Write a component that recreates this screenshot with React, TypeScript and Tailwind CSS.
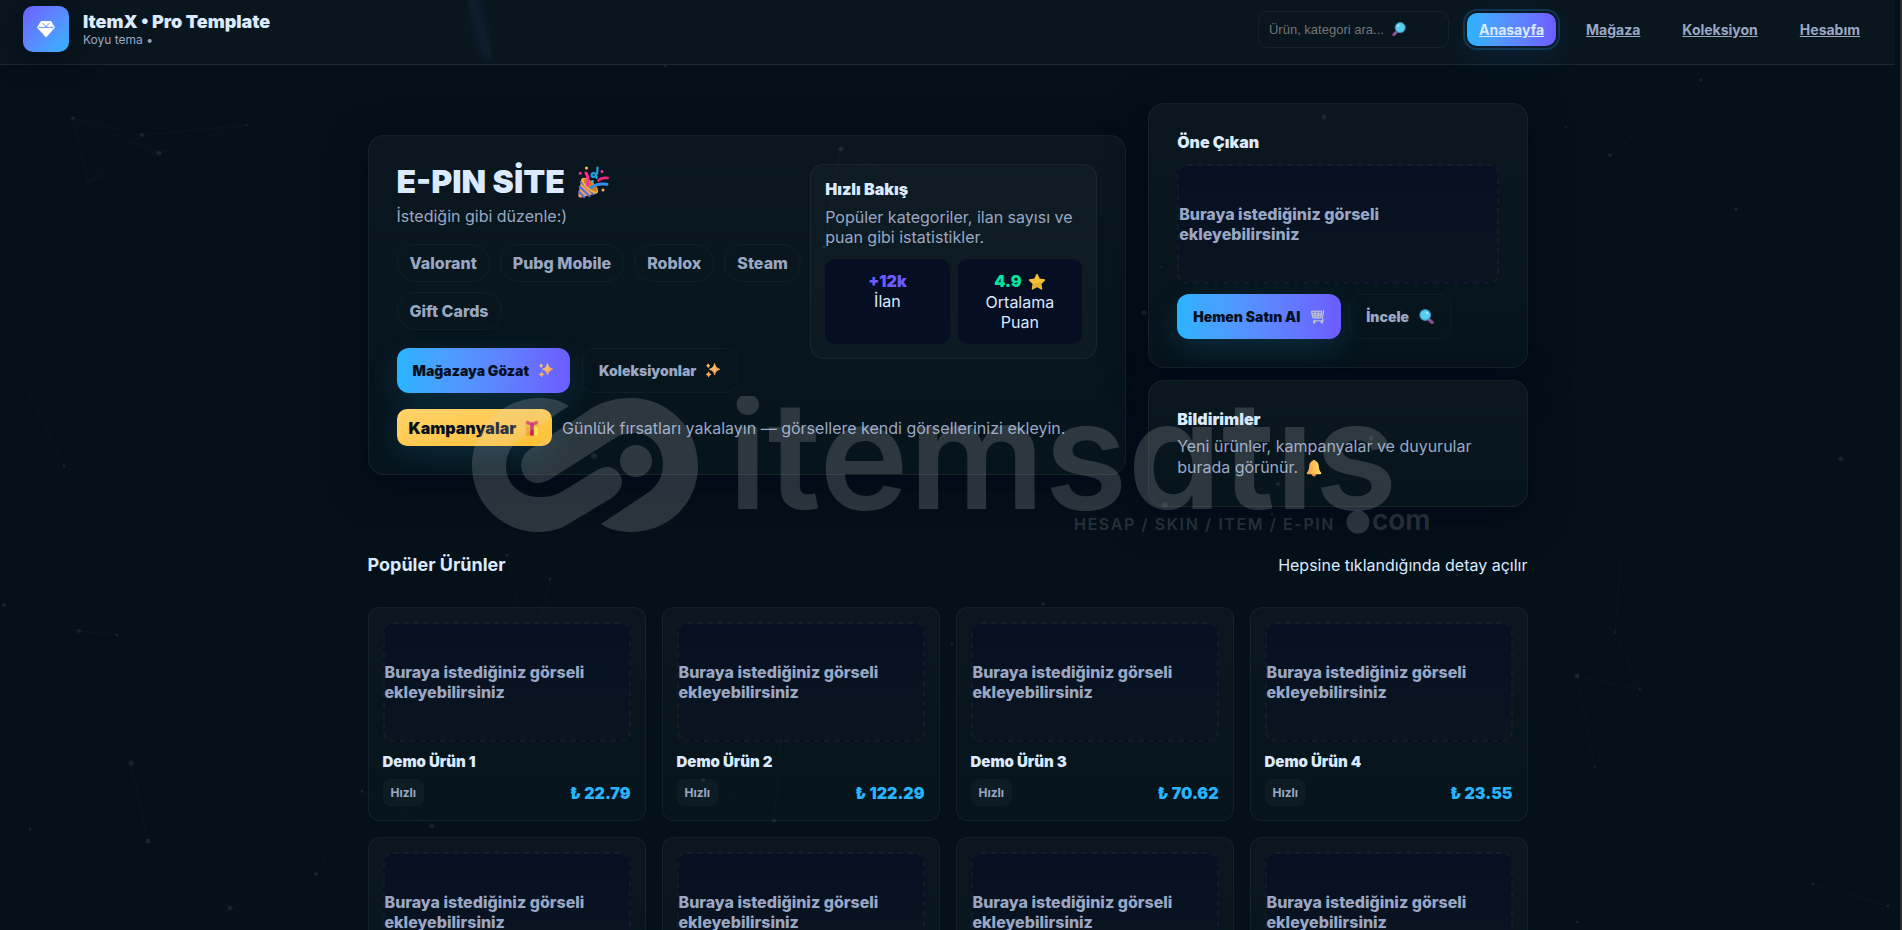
import React from 'react';

const NAV = ['Anasayfa', 'Mağaza', 'Koleksiyon', 'Hesabım'];
const CHIPS = ['Valorant', 'Pubg Mobile', 'Roblox', 'Steam', 'Gift Cards'];
const PRODUCTS = [
  { id: 1, price: '22.79' },
  { id: 2, price: '122.29' },
  { id: 3, price: '70.62' },
  { id: 4, price: '23.55' },
  { id: 5, price: '64.10' },
  { id: 6, price: '38.45' },
  { id: 7, price: '91.20' },
  { id: 8, price: '47.99' },
];

// x, y, radius
const DOTS: number[][] = [
  [73, 118, 2], [142, 135, 2], [159, 153, 2.5], [247, 125, 1],
  [1566, 127, 1], [1610, 155, 2], [1736, 209, 2], [1324, 117, 2.5],
  [841, 149, 2.5], [824, 247, 2], [665, 66, 1.5], [594, 456, 3], [1144, 313, 2.5], [1161, 267, 1],
  [1841, 459, 2.5], [64, 466, 1.5], [4, 605, 2], [79, 631, 2], [117, 635, 1.5],
  [131, 763, 2.5], [148, 841, 2.5], [30, 829, 1.5], [230, 908, 2.5], [316, 874, 2], [362, 791, 1.5],
  [432, 826, 2.5], [703, 780, 2], [774, 821, 2], [781, 741, 1], [952, 644, 1.5], [1043, 604, 2],
  [1577, 676, 2.5], [1640, 689, 1], [1615, 632, 1], [1595, 767, 1], [1577, 922, 1.5],
  [1813, 884, 1.5], [1888, 906, 1.5], [1371, 438, 2.5], [1278, 484, 2], [1165, 505, 3], [1272, 514, 1.5],
  [1457, 575, 1.5], [507, 555, 1.5], [550, 579, 1.5], [1701, 80, 1.5],
];

const LINES: number[][] = [
  [73, 118, 142, 135], [73, 118, 159, 153], [142, 135, 159, 153], [142, 135, 247, 125],
  [159, 153, 247, 125], [73, 118, 88, 182], [142, 135, 88, 182], [159, 153, 88, 182],
  [1701, 80, 1610, 155], [841, 149, 824, 247], [841, 149, 900, 180], [28, 390, 64, 466],
  [4, 605, 79, 631], [79, 631, 117, 635], [131, 763, 148, 841], [148, 841, 230, 908],
  [230, 908, 316, 874], [316, 874, 362, 791], [362, 791, 432, 826],
  [1577, 676, 1640, 689], [1577, 676, 1615, 632], [1615, 632, 1640, 689], [1577, 676, 1595, 767],
  [1640, 689, 1595, 767], [1615, 632, 1621, 560], [1813, 884, 1888, 906],
  [703, 780, 781, 741], [774, 821, 781, 741], [703, 780, 774, 821], [507, 555, 550, 579],
  [507, 555, 522, 622], [550, 579, 540, 622],
];

const Particles: React.FC = () => (
  <svg className="absolute inset-0 w-full h-full pointer-events-none" aria-hidden="true">
    <defs>
      <filter id="soft"><feGaussianBlur stdDeviation="4" /></filter>
    </defs>
    <path d="M470 -10L489 58" stroke="#3b4f9f" strokeOpacity="0.14" strokeWidth="12" fill="none" filter="url(#soft)" />
    {LINES.map(([x1, y1, x2, y2], i) => (
      <line key={i} x1={x1} y1={y1} x2={x2} y2={y2} stroke="#ffffff" strokeOpacity="0.025" />
    ))}
    {DOTS.map(([cx, cy, r], i) => (
      <circle key={i} cx={cx} cy={cy} r={r} fill="#ffffff" fillOpacity="0.08" />
    ))}
  </svg>
);

const Sparkles = () => (
  <svg viewBox="1 1 15 15" className="w-[15px] h-[15px] shrink-0" aria-hidden="true">
    <defs>
      <linearGradient id="spark" x1="0" y1="0" x2="0.4" y2="1">
        <stop offset="0" stopColor="#ffd65c" />
        <stop offset="1" stopColor="#ff9a62" />
      </linearGradient>
    </defs>
    <path fill="url(#spark)" stroke="url(#spark)" strokeWidth="0.8" strokeLinejoin="round" d="M9.6 1.6c.8 3.4 1.9 4.6 5.200 5.700-3.300 1.100-4.400 2.300-5.200 5.700-.8-3.400-1.900-4.600-5.200-5.700 3.300-1.100 4.400-2.300 5.200-5.700zM3.600 9.700c.400 1.700.900 2.200 2.500 2.700-1.600.500-2.100 1-2.500 2.700-.400-1.700-.900-2.200-2.500-2.700 1.600-.500 2.100-1 2.500-2.700zM3.200 1.800c.3 1.200.6 1.500 1.700 1.900-1.100.4-1.400.7-1.700 1.900-.3-1.200-.6-1.500-1.700-1.900 1.100-.4 1.400-.7 1.700-1.900z" />
  </svg>
);

const Magnifier = ({ className }: { className: string }) => (
  <svg viewBox="1 1 14 14" className={className} aria-hidden="true">
    <path d="M9.800 10.200l3.400 3.400" stroke="#8b4f8f" strokeWidth="3" strokeLinecap="round" />
    <circle cx="6.800" cy="6.600" r="5" fill="#58cdf0" stroke="#3c8fc0" strokeWidth="1" />
    <path d="M8.200 4.200l.8.900" stroke="#e6fbff" strokeWidth="1.200" strokeLinecap="round" />
  </svg>
);

const Gift = () => (
  <svg viewBox="0 0 18 18" className="w-4 h-[18px] shrink-0" aria-hidden="true">
    <rect x="2" y="7" width="14" height="10.500" rx="1" fill="#f0a524" />
    <rect x="10" y="7" width="6" height="10.500" rx="1" fill="#ffe04a" />
    <rect x="1" y="4.500" width="16" height="3.500" rx="1" fill="#f7b733" />
    <rect x="7" y="4.500" width="4" height="13" fill="#c81f63" />
    <path d="M9 5.500C6 1 3 .4 2.600 2.600 2.300 4.600 5 5.400 9 5.500zM9 5.500c3-4.500 6-5.100 6.400-2.900C15.700 4.600 13 5.400 9 5.500z" fill="#e0325f" stroke="#e0325f" />
    <rect x="7" y="2.500" width="4" height="4" rx="1" fill="#c01f5c" />
  </svg>
);

const Star = () => (
  <svg viewBox="0 0 18 18" className="w-[18px] h-[18px] shrink-0" aria-hidden="true">
    <path d="M9 1.500l2.300 4.800 5.200.7-3.800 3.700.9 5.300L9 13.500 4.400 16l.9-5.300L1.500 7l5.200-.7z" fill="#f5c235" stroke="#f5c235" strokeWidth="1.400" strokeLinejoin="round" />
    <path d="M9 13.500L4.400 16l.9-5.300 9-1.500-1.600 1.500.9 5.300z" fill="#dca32b" fillOpacity="0.6" />
  </svg>
);

const Bell = () => (
  <svg viewBox="0 0 18 18" className="inline-block align-[-4px] ml-0.5 w-[18px] h-[18px]" aria-hidden="true">
    <defs>
      <linearGradient id="bell" x1="0" y1="0" x2="1" y2="0">
        <stop offset="0" stopColor="#f09a55" />
        <stop offset="0.500" stopColor="#fcc453" />
        <stop offset="1" stopColor="#ffdd63" />
      </linearGradient>
    </defs>
    <circle cx="9" cy="15.200" r="2.200" fill="#e8843c" />
    <circle cx="9" cy="2" r="1.300" fill="#f3b04a" />
    <path d="M9 1.800c-3.400 0-4.600 2.600-4.800 5.400-.2 2.800-.8 4.400-2.200 6.300-.6.900-.2 1.700.7 1.700h12.600c.9 0 1.300-.8.700-1.700-1.400-1.900-2-3.500-2.200-6.300C13.600 4.400 12.400 1.800 9 1.800z" fill="url(#bell)" />
  </svg>
);

const Cart = () => (
  <svg viewBox="0 0 16 16" className="w-[15px] h-[15px] shrink-0" aria-hidden="true" fill="none" stroke="#c3c7d4" strokeWidth="1.100" strokeLinecap="round" strokeLinejoin="round">
    <path d="M1.500 2.500h11l-1 7H3.200z" fill="#8f97b5" fillOpacity="0.5" />
    <path d="M2 5h10.500M2.500 7.200h9.500M5 2.500l.6 7M8.700 2.500v7" />
    <path d="M14.600 1.500l-1.400 8.500 1 2.500H4" />
    <circle cx="4.500" cy="14" r="0.900" fill="#c99a86" />
    <circle cx="12.600" cy="14" r="0.900" fill="#c99a86" />
  </svg>
);

const Party = () => (
  <svg viewBox="0 0 32 32" className="w-8 h-8 shrink-0" aria-hidden="true" fill="none" strokeLinecap="round">
    <path d="M4.500 12.500L20.500 27 4.500 31.500Q1.200 32 1.300 29z" fill="#f2a154" />
    <path d="M4 16l12.600 12M3 21l9.500 9M2.200 26l5 5" stroke="#5a6fd6" strokeWidth="2.400" />
    <ellipse cx="12.900" cy="19.600" rx="4.400" ry="10.600" transform="rotate(-47 12.900 19.600)" fill="#f7b23c" />
    <ellipse cx="13.400" cy="19.200" rx="3" ry="9" transform="rotate(-47 13.400 19.200)" fill="#c98322" />
    <path d="M10.500 19c1.200-4.500 1-8-1.500-12" stroke="#ff2f92" strokeWidth="3" />
    <path d="M14 21.500c4.500-3.300 10-4.200 16-3.200" stroke="#3b8bea" strokeWidth="3" />
    <path d="M20.500 1.500c.2 4-.5 9.500-4 9.500-2.600 0-2.600-4 0-4 2.300 0 3 3.500 3.200 5" stroke="#1fa0e0" strokeWidth="2.200" />
    <path d="M21.500 14.500c2-2.400 5-3 9.200-2.500" stroke="#f0287f" strokeWidth="2.600" />
    <circle cx="15.500" cy="15.500" r="1.400" fill="#28b4e8" />
    <circle cx="9.500" cy="2" r="1.500" fill="#ffc83d" />
    <circle cx="3.200" cy="7.200" r="1.500" fill="#ff2f92" />
    <circle cx="25" cy="5.500" r="1.500" fill="#ff2f92" />
    <circle cx="26" cy="24" r="1.500" fill="#ffb35c" />
  </svg>
);

const Logo = () => (
  <div className="flex items-center justify-center w-[46px] h-[46px] rounded-[10px] bg-linear-to-br from-[#6c5cff] to-[#28b4ff] shadow-[0_6px_30px_rgba(2,6,23,0.6)]">
    <svg viewBox="0 0 20 18" className="w-5 h-[18px]" aria-hidden="true">
      <path d="M5 1h10l4 6.500L10 17.500 1 7.500z" fill="#fff" />
      <path d="M2.500 7.400h15M6.500 3l2.700 2.800L10 7l.8-1.200L13.500 3" stroke="#4f8bff" strokeWidth="0.900" fill="none" />
    </svg>
  </div>
);

const Placeholder = () => (
  <div className="flex items-center h-[120px] rounded-[10px] border-2 border-dashed border-white/4 bg-linear-to-b from-[#061022] to-[#0b1520] font-extrabold text-[#9aa7c4]">
    Buraya istediğiniz görseli ekleyebilirsiniz
  </div>
);

const card = 'border border-white/5 bg-linear-to-b from-[#0a171e] to-[#06141c] shadow-[0_10px_40px_rgba(2,6,23,0.7)]';
const primaryBtn = 'flex items-center gap-2.5 h-[45px] px-4 rounded-xl bg-linear-to-r from-[#28b4ff] to-[#6c5cff] text-[#06101f] text-sm font-black shadow-[0_10px_30px_rgba(40,180,255,0.15)]';
const ghostBtn = 'flex items-center gap-2.5 h-[45px] px-4 rounded-xl border border-white/4 text-[#9aa7c4] text-sm font-black';

const Header: React.FC = () => (
  <header className="flex items-center justify-between pt-1.5 pb-3 px-[23px] border-b border-white/8 bg-white/[0.025]">
    <div className="flex items-center gap-3.5">
      <Logo />
      <div>
        <div className="text-lg leading-[22px] font-black">ItemX • Pro Template</div>
        <div className="text-xs leading-[14px] text-[#9aa7c4]">Koyu tema •</div>
      </div>
    </div>
    <nav className="flex items-center gap-[18px]">
      <label className="relative block">
        <span className="sr-only">Ara</span>
        <input
          type="search"
          placeholder="Ürün, kategori ara..."
          className="block w-[191px] h-[37px] px-2.5 rounded-[10px] border border-white/5 bg-transparent font-['Liberation_Sans',sans-serif] text-[13px] leading-5 placeholder:text-[#757575] outline-none"
        />
        <Magnifier className="absolute left-[134px] top-[11px] w-[14px] h-[14px] -scale-x-100" />
      </label>
      {NAV.map((item, i) => (
        <a
          key={item}
          href="#"
          className={
            i === 0
              ? 'px-3 py-1.5 rounded-[10px] text-sm leading-[21px] font-bold underline text-[#dbeafe] bg-linear-to-r from-[#28b4ff] to-[#6c5cff] outline-2 outline-offset-2 outline-[#28b4ff]/20 shadow-[0_8px_30px_rgba(40,120,255,0.12)]'
              : 'px-3 py-1.5 text-sm leading-[21px] font-bold underline text-[#9aa7c4]'
          }
        >
          {item}
        </a>
      ))}
    </nav>
  </header>
);

const Hero: React.FC = () => (
  <section className={`p-7 rounded-2xl ${card}`}>
    <div className="flex items-start gap-2">
      <div className="flex-1">
        <h1 className="flex items-center gap-3 text-[32px] leading-9 font-black">
          E-PIN SİTE <Party />
        </h1>
        <p className="mt-1.5 leading-5 text-[#9aa7c4]">İstediğin gibi düzenle:)</p>
        <div className="flex flex-wrap gap-2.5 mt-[18px]">
          {CHIPS.map((chip) => (
            <span key={chip} className="px-3 py-2 rounded-full border border-white/4 leading-5 font-extrabold text-[#9aa7c4]">
              {chip}
            </span>
          ))}
        </div>
        <div className="flex gap-3 mt-[18px]">
          <button type="button" className={primaryBtn}>Mağazaya Gözat <Sparkles /></button>
          <button type="button" className={ghostBtn}>Koleksiyonlar <Sparkles /></button>
        </div>
      </div>
      <aside className="w-[287px] p-3.5 rounded-[14px] border border-white/5 bg-white/[0.025]">
        <h2 className="leading-5 font-black">Hızlı Bakış</h2>
        <p className="mt-2 leading-5 text-[#9aa7c4]">Popüler kategoriler, ilan sayısı ve puan gibi istatistikler.</p>
        <div className="grid grid-cols-2 gap-2 mt-3 text-center leading-5">
          <div className="p-3 rounded-[10px] bg-[#060e24]">
            <div className="font-black text-[#6c5cff]">+12k</div>
            İlan
          </div>
          <div className="p-3 rounded-[10px] bg-[#060e24]">
            <div className="flex items-center justify-center gap-1.5 leading-[21px] font-black text-[#00e6a0]">4.9 <Star /></div>
            Ortalama Puan
          </div>
        </div>
      </aside>
    </div>
    <div className="flex items-center gap-2.5 mt-4">
      <button type="button" className="flex items-center gap-2 h-[37px] px-3 rounded-[10px] bg-linear-to-br from-[#ffd36b] to-[#ffc02e] text-[#06101f] font-black shadow-[0_8px_30px_rgba(40,180,255,0.15)]">
        Kampanyalar <Gift />
      </button>
      <p className="leading-5 text-[#9aa7c4]">Günlük fırsatları yakalayın — görsellere kendi görsellerinizi ekleyin.</p>
    </div>
  </section>
);

const Sidebar: React.FC = () => (
  <div className="flex flex-col gap-3">
    <section className={`p-7 rounded-2xl ${card}`}>
      <h2 className="mb-3 leading-5 font-black">Öne Çıkan</h2>
      <Placeholder />
      <div className="flex gap-2 mt-2.5">
        <button type="button" className={primaryBtn}>Hemen Satın Al <Cart /></button>
        <button type="button" className={ghostBtn}>İncele <Magnifier className="w-[15px] h-[15px] shrink-0" /></button>
      </div>
    </section>
    <section className={`p-7 rounded-2xl ${card}`}>
      <h2 className="mb-[7px] leading-5 font-black">Bildirimler</h2>
      <p className="leading-[21px] text-[#9aa7c4]">Yeni ürünler, kampanyalar ve duyurular burada görünür. <Bell /></p>
    </section>
  </div>
);

const ProductCard = ({ id, price }: { id: number; price: string }) => (
  <article className="p-3.5 rounded-xl border border-white/5 bg-linear-to-b from-[#0a171e] to-[#06141c]">
    <Placeholder />
    <h3 className="mt-2.5 text-[15px] leading-5 font-black">Demo Ürün {id}</h3>
    <div className="flex items-center justify-between mt-[7px]">
      <span className="px-2 py-1.5 rounded-lg bg-white/[0.03] text-xs leading-[15px] font-bold text-[#9aa7c4]">Hızlı</span>
      <span className="leading-5 font-black text-[#28b4ff]">₺ {price}</span>
    </div>
  </article>
);

// Faint brand stamp floating over the page; the round dot doubles as the cedilla
const Watermark: React.FC = () => (
  <div className="absolute left-[470px] top-[396px] w-[964px] h-[140px] pointer-events-none text-[rgba(220,220,220,0.18)]" aria-hidden="true">
    <svg viewBox="470 396 964 140" className="w-full h-full" fill="currentColor">
      <path d="M569 406C560 400 550 398 540 398C502 398 472 428 472 466C472 503 502 532 539 532C550 532 561 529 570 523L610 499C620 493 625 483 620 475C615 466 605 465 597 470L563 491C555 496 548 497 540 497C520 497 506 484 506 466C506 453 513 443 523 436Z" />
      <path d="M529 450L592 408C604 401 617 398 631 398C668 398 698 428 698 466C698 503 668 532 632 532C620 532 610 530 601 524L646 494C657 487 663 477 663 464C663 446 650 433 635 433C627 433 619 435 612 440L552 478C542 485 531 485 525 477C519 469 520 457 529 450Z" />
      <circle cx="1358" cy="522" r="11.500" />
      <circle cx="636" cy="461" r="16" />
      <text x="728" y="509" className="font-semibold text-[151px] [font-feature-settings:'cv11']">itemsatıs</text>
      <text x="1372" y="530" className="font-semibold text-[28px]">com</text>
      <text x="1074" y="530" className="font-semibold text-base tracking-widest">HESAP / SKIN / ITEM / E-PIN</text>
    </svg>
  </div>
);

export default function App() {
  return (
    <div className="relative h-screen overflow-hidden border-r-2 border-[#2b2b2b] bg-[#041119] pr-[5px] font-['Inter',sans-serif] text-base leading-5 text-[#dbeafe]">
      <Header />
      <main className="max-w-[1160px] mx-auto pt-[38px]">
        <div className="grid grid-cols-[2fr_1fr] items-center gap-[22px]">
          <Hero />
          <Sidebar />
        </div>
        <div className="flex items-center justify-between mt-11 mb-7">
          <h2 className="text-lg leading-7 font-bold">Popüler Ürünler</h2>
          <span>Hepsine tıklandığında detay açılır</span>
        </div>
        <div className="grid grid-cols-4 gap-4">
          {PRODUCTS.map((p) => (
            <ProductCard key={p.id} {...p} />
          ))}
        </div>
      </main>
      <Particles />
      <Watermark />
    </div>
  );
}
